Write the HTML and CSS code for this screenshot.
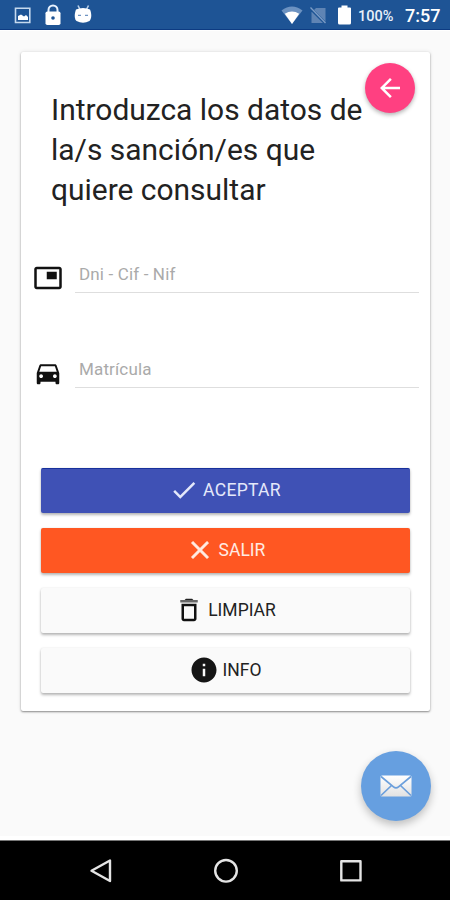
FILE: index.html
```
<!DOCTYPE html>
<html lang="es">
<head>
<meta charset="utf-8">
<title>Consulta de sanciones</title>
<link rel="stylesheet" href="styles.css">
</head>
<body>
<div class="screen">
  <header class="status">
    <svg class="status-left" width="100" height="30" viewBox="0 0 100 30">
      <path d="M15.500 8.200h14.300v14.300H15.500z" fill="none" stroke="#c5d9ee" stroke-width="1.600"/>
      <path d="M18 20v-4l3-1.500 3 2 2-1.500 2 2v3z" fill="#fff"/>
      <path d="M48.500 12V10a4.500 4.500 0 0 1 9 0v2" fill="none" stroke="#e8f2ff" stroke-width="2"/>
      <rect x="45.500" y="11.500" width="15" height="13.500" rx="1.800" fill="#fff"/>
      <circle cx="53" cy="18" r="1.800" fill="#1e5495"/>
      <path d="M78 5.500l2 4M88.500 5.500l-2 4" stroke="#b9d0ea" stroke-width="1.600"/>
      <path d="M76 9.500q7-3 14 0c2 5 1.500 9-.5 11.500q-6.500 3.500-13 0C74.500 19 74 15 76 9.500z" fill="#fff"/>
      <path d="M78 15.300h3M85 15.300h3" stroke="#6f94c2" stroke-width="1.300"/>
    </svg>
    <div class="status-right">
      <svg width="75" height="30" viewBox="0 0 75 30">
        <path d="M1.500 10.500Q12 2.500 22.500 10.500L12 24z" fill="#6c92c1"/>
        <path d="M4.800 13.800Q12 9.200 19.200 13.800L12 24z" fill="#fff"/>
        <path d="M36 8h9.500v15H31.500V12.500z" fill="#5f84b4"/>
        <path d="M30 8l16 16" stroke="#1e5495" stroke-width="3"/>
        <path d="M30.500 7.500l15 15.500" stroke="#7d9dc6" stroke-width="1.300"/>
        <path d="M61.500 5.500h6v2h2.500q1 0 1 1V23q0 1.500-1.500 1.500h-10Q58 24.500 58 23V8.500q0-1 1-1h2.500z" fill="#fff"/>
      </svg>
      <span class="battery">100%</span>
      <span class="clock">7:57</span>
    </div>
  </header>

  <main class="content">
    <section class="card">
      <h1 class="title">Introduzca los datos de<br>la/s sanción/es que<br>quiere consultar</h1>
      <button class="back" aria-label="Volver">
        <svg width="30" height="30" viewBox="0 0 24 24"><path d="M20 11H7.830l5.590-5.590L12 4l-8 8 8 8 1.410-1.410L7.830 13H20v-2z" fill="#fff"/></svg>
      </button>
      <label class="field">
        <svg width="30" height="30" viewBox="0 0 24 24"><path d="M19 7h-8v6h8V7zm2-4H3c-1.100 0-2 .9-2 2v14c0 1.100.9 1.980 2 1.980h18c1.100 0 2-.88 2-1.980V5c0-1.100-.9-2-2-2zm0 16.010H3V4.980h18v14.030z" fill="#111"/></svg>
        <span class="input">Dni - Cif - Nif</span>
      </label>
      <label class="field">
        <svg width="30" height="30" viewBox="0 0 24 24"><path d="M18.920 6.010C18.720 5.420 18.160 5 17.500 5h-11c-.66 0-1.210.42-1.420 1.010L3 12v8c0 .55.450 1 1 1h1c.55 0 1-.45 1-1v-1h12v1c0 .55.450 1 1 1h1c.55 0 1-.45 1-1v-8l-2.080-5.990zM6.500 16c-.83 0-1.500-.67-1.500-1.500S5.670 13 6.500 13s1.500.67 1.500 1.500S7.330 16 6.500 16zm11 0c-.83 0-1.500-.67-1.500-1.500s.67-1.500 1.500-1.500 1.500.67 1.500 1.500-.67 1.500-1.500 1.500zM5 11l1.500-4.500h11L19 11H5z" fill="#111"/></svg>
        <span class="input">Matrícula</span>
      </label>
      <div class="actions">
        <button class="btn accept"><svg width="30" height="30" viewBox="0 0 24 24"><path d="M9 16.170L4.830 12l-1.420 1.410L9 19 21 7l-1.410-1.410z" fill="currentColor"/></svg><span>ACEPTAR</span></button>
        <button class="btn exit"><svg width="30" height="30" viewBox="0 0 24 24"><path d="M19 6.410L17.590 5 12 10.590 6.410 5 5 6.410 10.590 12 5 17.590 6.410 19 12 13.410 17.590 19 19 17.590 13.410 12z" fill="currentColor" stroke="currentColor" stroke-width=".4"/></svg><span>SALIR</span></button>
        <button class="btn clear"><svg width="30" height="30" viewBox="0 0 24 24"><path d="M6 19c0 1.100.9 2 2 2h8c1.100 0 2-.9 2-2V7H6v12zM8 9h8v10H8V9z" fill="#111"/><path d="M5 4h14v2H5z" fill="#666"/><path d="M8.500 4l1-1h5l1 1z" fill="#222"/></svg><span>LIMPIAR</span></button>
        <button class="btn info"><svg width="30" height="30" viewBox="0 0 24 24"><path d="M12 2C6.480 2 2 6.480 2 12s4.480 10 10 10 10-4.480 10-10S17.520 2 12 2zm1 15h-2v-6h2v6zm0-8h-2V7h2v2z" fill="#151515"/></svg><span>INFO</span></button>
      </div>
    </section>
    <button class="mail" aria-label="Correo">
      <svg width="32" height="22" viewBox="0 0 32 22">
        <defs><linearGradient id="paper" x1="0" y1="0" x2="0" y2="1"><stop offset="0" stop-color="#fff"/><stop offset="1" stop-color="#e2e2e2"/></linearGradient></defs>
        <rect x=".5" y=".5" width="31" height="21" rx="1.500" fill="url(#paper)"/>
        <path d="M1 1.500l12.500 10.300q2.500 2 5 0L31 1.500M1 20.500l10.500-10M31 20.500l-10.500-10" fill="none" stroke="#6b9fdc" stroke-width="1.700"/>
      </svg>
    </button>
  </main>

  <nav class="navbar">
    <svg width="450" height="59" viewBox="0 0 450 59" fill="none" stroke="#e4e4e4" stroke-width="2.400" stroke-linejoin="round">
      <path d="M110 19.500v20.500L91.500 29.800z"/>
      <circle cx="226" cy="29.800" r="10.800"/>
      <rect x="341.300" y="20.200" width="19.200" height="19.200"/>
    </svg>
  </nav>
</div>
</body>
</html>
```
FILE: styles.css
```
* { box-sizing: border-box; }
body { margin: 0; font-family: Roboto, "Liberation Sans", sans-serif; }
button { border: 0; padding: 0; font: inherit; }
svg { display: block; flex: none; }
.screen { width: 450px; height: 900px; display: flex; flex-direction: column; background: #fafafa; overflow: hidden; }
.status { height: 30px; flex: none; display: flex; justify-content: space-between; background: #1e5495; border-bottom: 1px solid #0d3b82; color: #fff; }
.status-right { display: flex; align-items: center; padding-right: 10px; }
.status-right svg { margin-right: 1px; }
.battery { width: 49px; padding-left: 2px; padding-top: 3px; font-size: 14.500px; font-weight: 500; color: #e8f0fa; }
.clock { width: 35px; padding-top: 2px; font-size: 18px; font-weight: 500; white-space: nowrap; }
.content { flex: 1; position: relative; padding: 22px 20px 0 21px; border-top: 1px solid #fff; border-bottom: 4px solid #fff; }
.card { position: relative; height: 659px; margin-top: -1px; padding-top: 38px; border-radius: 2px; background: #fff; box-shadow: 0 1px 2px rgba(0,0,0,.42), 0 0 4px rgba(0,0,0,.1); }
.title { margin: 0 0 0 30px; height: 159px; font-size: 29.950px; line-height: 40px; font-weight: 400; color: #222; white-space: nowrap; }
.back { position: absolute; top: 11px; right: 15px; width: 50px; height: 50px; border-radius: 50%; background: #ff4081; display: grid; place-items: center; box-shadow: 0 2px 4px rgba(0,0,0,.3); }
.field { display: flex; height: 95px; padding-left: 12px; align-items: flex-start; }
.field svg { margin-top: 14px; }
.input { width: 344px; height: 44px; margin-left: 12px; padding: 15px 0 0 4px; border-bottom: 1px solid #dedede; font-size: 17px; letter-spacing: .15px; line-height: 20px; color: #aaa; }
.actions { display: grid; grid-auto-rows: 45px; gap: 15px; padding: 29px 20px 0; }
.btn { display: flex; align-items: center; justify-content: center; gap: 4px; padding: 0 1px 1px 0; border-radius: 2px; font-size: 17.500px; background: #fafafa; color: #222; box-shadow: 0 2px 3px rgba(0,0,0,.28), 0 0 2px rgba(0,0,0,.1); }
.accept { padding-bottom: 2px; letter-spacing: .3px; background: #3f51b5; color: #e4e8fa; border-top: 1px solid #17309c; }
.exit { background: #ff5722; color: #ffebe3; }
.mail { position: absolute; right: 19px; bottom: 15px; width: 70px; height: 70px; border-radius: 50%; background: #669fe0; display: grid; place-items: center; box-shadow: 0 4px 8px rgba(0,0,0,.24); }
.navbar { height: 60px; flex: none; background: #000; border-top: 1px solid #777; }
```
